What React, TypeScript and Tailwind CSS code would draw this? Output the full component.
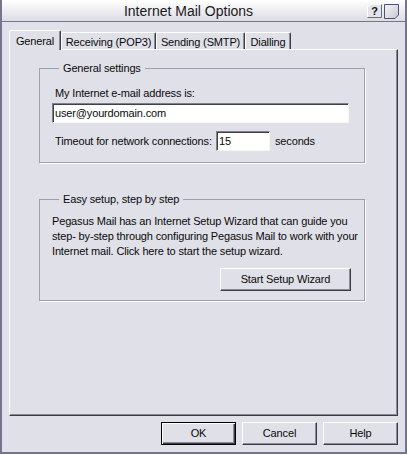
import React from 'react'

// Internet Mail Options dialog (Pegasus Mail), classic bevelled look

const tabs = [
  { label: 'General', width: 'w-[52px]', active: true },
  { label: 'Receiving (POP3)', width: 'w-[95px]', active: false },
  { label: 'Sending (SMTP)', width: 'w-[89px]', active: false },
  { label: 'Dialling', width: 'w-[46px]', active: false },
]

function HelpButton() {
  return (
    <svg width="15" height="14" viewBox="0 0 15 14" className="block">
      <polygon points="3,0.5 14.5,0.5 14.5,13.5 0.5,13.5 0.5,3" fill="#e4e4ec" />
      <polyline points="0.5,13 0.5,3 3,0.5 14,0.5" fill="none" stroke="#ffffff" />
      <polyline points="14.5,0.5 14.5,13.5 0.5,13.5" fill="none" stroke="#6a6a7e" />
      <text x="7.6" y="11" textAnchor="middle" fontSize="11" fontWeight="bold" fontFamily="Liberation Sans, Arial, sans-serif" fill="#111">?</text>
    </svg>
  )
}

function BoxButton() {
  return (
    <svg width="15" height="15" viewBox="0 0 15 15" className="block">
      <defs>
        <linearGradient id="bx" x1="0" y1="0" x2="1" y2="1">
          <stop offset="0" stopColor="#f4f4f8" />
          <stop offset="1" stopColor="#c8c8d4" />
        </linearGradient>
      </defs>
      <polygon points="0.5,0.5 14.5,0.5 14.5,11 11,14.5 0.5,14.5" fill="url(#bx)" stroke="#50506c" />
    </svg>
  )
}

function Button({ children, def = false, className = '' }: { children: React.ReactNode; def?: boolean; className?: string }) {
  const frame = def
    ? 'border border-black shadow-[inset_1px_1px_0_#ffffff,inset_-1px_-1px_0_#3c3c48,inset_-2px_-2px_0_#8c8c98]'
    : 'border border-t-white border-l-white border-b-[#3c3c48] border-r-[#3c3c48] shadow-[inset_-1px_-1px_0_#8c8c98]'
  return (
    <div className={`h-[23px] flex items-center justify-center bg-[#e0e0e8] ${frame} ${className}`}>
      {children}
    </div>
  )
}

function Sunken({ value, className = '' }: { value: string; className?: string }) {
  return (
    <div
      className={`h-[20px] bg-white flex items-center pl-[2px] border border-t-[#808088] border-l-[#808088] border-b-[#f8f8ec] border-r-[#f8f8ec] shadow-[inset_1px_1px_0_#404048] ${className}`}
    >
      {value}
    </div>
  )
}

export default function App() {
  return (
    <div className="w-[407px] h-[455px] bg-white font-['Liberation_Sans',Arial,sans-serif] text-[11px] tracking-[-0.15px] text-[#0a0a0a]">
      <div className="h-[454px] flex flex-col bg-[#e0e0e8] border-x-2 border-b-2 border-[#74748e]">
        {/* Title bar */}
        <div className="h-[22px] flex items-center bg-gradient-to-b from-white to-[#dcdce4] border-b border-[#74748e] pr-[6px]">
          <div className="flex-1 text-center text-[14px] tracking-normal text-[#1a1a1a] pl-[8px] pt-[1px]">Internet Mail Options</div>
          <div className="flex items-center gap-[2px] pt-[1px]">
            <HelpButton />
            <BoxButton />
          </div>
        </div>

        {/* Client area */}
        <div className="flex-1 flex flex-col pt-[8px] pl-[7px] pr-[7px]">
          <div className="h-[19px] flex items-end">
            {tabs.map((t) =>
              t.active ? (
                <div
                  key={t.label}
                  className={`${t.width} h-[20px] -mb-[1px] relative z-10 bg-[#e0e0e8] border-l border-t border-white border-r border-r-[#3c3c48] rounded-t-[2px] shadow-[inset_-1px_0_0_#8c8c98] flex items-start justify-center pt-[2px]`}
                >
                  {t.label}
                </div>
              ) : (
                <div
                  key={t.label}
                  className={`${t.width} h-[17px] bg-[#e0e0e8] border-l border-t border-white border-r border-r-[#3c3c48] rounded-t-[2px] shadow-[inset_-1px_0_0_#8c8c98] flex items-start justify-center pt-[1px]`}
                >
                  {t.label}
                </div>
              )
            )}
          </div>

          {/* Tab panel */}
          <div className="h-[367px] border border-t-white border-l-white border-b-[#3c3c48] border-r-[#3c3c48] shadow-[inset_-1px_-1px_0_#8c8c98] pl-[29px] pt-[11px]">
            <fieldset className="min-w-0 w-[326px] border border-[#a0a0ac] shadow-[1px_1px_0_#ffffff] pl-[12px] pb-[11px]">
              <legend className="ml-[7px] px-[4px] leading-[14px]">General settings</legend>
              <div className="mt-[11px] ml-[3px] leading-[14px]">My Internet e-mail address is:</div>
              <Sunken value="user@yourdomain.com" className="mt-[3px] w-[297px]" />
              <div className="mt-[8px] flex items-center">
                <span className="w-[164px] pl-[3px] whitespace-nowrap">Timeout for network connections:</span>
                <Sunken value="15" className="w-[54px]" />
                <span className="ml-[5px]">seconds</span>
              </div>
            </fieldset>

            <fieldset className="min-w-0 mt-[29px] w-[326px] border border-[#a0a0ac] shadow-[1px_1px_0_#ffffff] pl-[12px] pr-[13px] pb-[9px]">
              <legend className="ml-[7px] px-[4px] leading-[14px]">Easy setup, step by step</legend>
              <p className="mt-[8px] leading-[15px] whitespace-nowrap">
                Pegasus Mail has an Internet Setup Wizard that can guide you
                <br />
                step- by-step through configuring Pegasus Mail to work with your
                <br />
                Internet mail. Click here to start the setup wizard.
              </p>
              <div className="mt-[9px] flex justify-end">
                <Button className="w-[131px]">Start Setup Wizard</Button>
              </div>
            </fieldset>
          </div>

          {/* Dialog buttons */}
          <div className="mt-[6px] flex justify-end gap-[6px]">
            <Button def className="w-[75px]">OK</Button>
            <Button className="w-[75px]">Cancel</Button>
            <Button className="w-[75px]">Help</Button>
          </div>
        </div>
      </div>
    </div>
  )
}
